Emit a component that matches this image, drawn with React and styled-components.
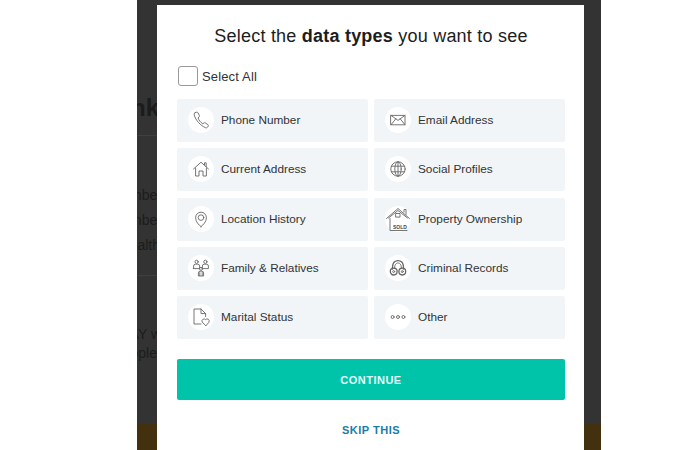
import React from "react";
import styled, { createGlobalStyle } from "styled-components";

const Global = createGlobalStyle`
  html, body { margin: 0; padding: 0; background: #fff; }
  body { font-family: "Liberation Sans", Arial, sans-serif; }
`;

const Stage = styled.div`
  position: relative;
  width: 700px;
  height: 450px;
  overflow: hidden;
  background: #fff;
`;

const Backdrop = styled.div`
  width: 464px;
  height: 450px;
  margin-left: 137px;
  background: #333;
  display: flex;
  flex-direction: column;
  box-sizing: border-box;
`;

const Gutter = styled.div`
  width: 20px;
  height: 424px;
  overflow: hidden;
  display: flex;
  flex-direction: column;
  flex: none;
`;

const BackLine = styled.div`
  display: flex;
  justify-content: flex-end;
  white-space: nowrap;
  color: #1c1c1c;
  font-size: ${(p) => p.$size || 14}px;
  font-weight: ${(p) => (p.$bold ? 700 : 400)};
  height: ${(p) => p.$h}px;
  line-height: ${(p) => p.$h}px;
  margin-top: ${(p) => p.$mt || 0}px;
  margin-right: ${(p) => -(p.$over || 0)}px;
`;

const Rule = styled.div`
  height: 1px;
  background: #3f3f3f;
  margin-top: ${(p) => p.$mt}px;
`;

const Footer = styled.div`
  height: 26px;
  background: #42300f;
`;

const Modal = styled.section`
  position: absolute;
  left: 157px;
  top: 5px;
  width: 427px;
  height: 445px;
  background: #fff;
  box-sizing: border-box;
  padding: 20px 19px 0 20px;
  display: flex;
  flex-direction: column;
`;

const Title = styled.h2`
  margin: 0;
  font-size: 18px;
  line-height: 22px;
  font-weight: 400;
  letter-spacing: 0.22px;
  text-align: center;
  color: #1d1d1d;
  white-space: nowrap;
  b { font-weight: 700; }
`;

const SelectAll = styled.label`
  display: flex;
  align-items: center;
  gap: 4px;
  margin: 19px 0 0 1px;
  height: 20px;
  font-size: 13px;
  letter-spacing: 0.15px;
  color: #333;
`;

const Box = styled.span`
  width: 18px;
  height: 18px;
  border: 1px solid #999;
  border-radius: 3px;
  background: #fff;
  flex: none;
`;

const Grid = styled.div`
  display: grid;
  grid-template-columns: 191px 191px;
  column-gap: 6px;
  row-gap: 6.25px;
  grid-auto-rows: 43px;
  margin-top: 13px;
`;

const Item = styled.div`
  display: flex;
  align-items: center;
  gap: 7px;
  padding-left: 11px;
  padding-bottom: 1px;
  box-sizing: border-box;
  background: #f1f5f8;
  border-radius: 2px;
  font-size: 11.8px;
  color: #333;
  white-space: nowrap;
`;

const Circle = styled.span`
  width: 26px;
  height: 26px;
  border-radius: 50%;
  background: #fff;
  flex: none;
  display: flex;
  align-items: center;
  justify-content: center;
`;

const Glyph = styled.svg`
  width: ${(p) => p.$size || 18}px;
  height: ${(p) => p.$size || 18}px;
  fill: none;
  stroke: #666;
  stroke-width: 0.9;
  stroke-linecap: round;
  stroke-linejoin: round;
  flex: none;
`;

const SoldText = styled.text`
  font-family: "Liberation Sans", Arial, sans-serif;
  font-size: 5px;
  font-weight: 700;
  fill: #444;
  stroke: none;
`;

const Continue = styled.button`
  margin-top: 20px;
  height: 41px;
  width: 388px;
  flex: none;
  border: 0;
  border-radius: 2px;
  background: #00c4aa;
  color: #e9fbf8;
  font: 700 11px "Liberation Sans", Arial, sans-serif;
  letter-spacing: 0.5px;
`;

const Skip = styled.a`
  margin-top: 24px;
  text-align: center;
  color: #1a7ba8;
  font-size: 11px;
  font-weight: 700;
  letter-spacing: 0.5px;
`;

const icons = {
  phone: (
    <Glyph viewBox="0 0 18 18">
      <path d="M3 1.8 L4.6 1.2 C5.2 1 5.7 1.2 6 1.8 L7.4 4.6 C7.6 5.1 7.5 5.6 7.1 5.9 L6 6.8 C6.8 9.2 8.6 11.4 10.8 12.8 L12 11.9 C12.4 11.6 12.9 11.6 13.3 11.9 L15.9 13.7 C16.4 14.1 16.5 14.6 16.2 15.1 L15.4 16.3 C15 16.9 14.3 17 13.6 16.7 C8.4 14.6 3.8 9.4 2.2 4 C2 3 2.4 2.2 3 1.8 Z" />
    </Glyph>
  ),
  house: (
    <Glyph viewBox="0 0 18 18">
      <path d="M1.5 9 L9 2.2 L16.5 9" />
      <path d="M12.5 4.8 V2.8 H14.2 V6.4" />
      <path d="M3.6 8 V16 H7 V11 H11 V16 H14.4 V8" />
    </Glyph>
  ),
  pin: (
    <Glyph viewBox="0 0 18 18">
      <path d="M9 16.6 C6.6 14.8 3.6 11.8 3.6 7.6 A5.4 5.4 0 0 1 14.4 7.6 C14.4 11.8 11.4 14.8 9 16.6 Z" />
      <circle cx="9" cy="7.6" r="2.8" />
    </Glyph>
  ),
  family: (
    <Glyph viewBox="0 0 18 18">
      <circle cx="4.6" cy="2.8" r="1.6" />
      <circle cx="13.4" cy="2.8" r="1.6" />
      <path d="M1.6 9.6 V7 Q1.6 5.2 3.4 5.2 H5.8 Q7.6 5.2 7.6 7 V9.6 H1.6 Z" />
      <path d="M10.4 9.6 V7 Q10.4 5.2 12.2 5.2 H14.6 Q16.4 5.2 16.4 7 V9.6 H10.4 Z" />
      <circle cx="9" cy="9.8" r="1.5" />
      <path d="M6.4 16.6 V14 Q6.4 12.2 8 12.2 H10 Q11.6 12.2 11.6 14 V16.6 Z" />
      <path d="M7.8 13.6 V16.6 M10.2 13.6 V16.6" />
    </Glyph>
  ),
  doc: (
    <Glyph viewBox="0 0 20 20" $size={20}>
      <path d="M10 17 H3 V2 H10 L14.6 6.6 V9.5" />
      <path d="M10 2 V6.6 H14.6" />
      <path d="M14.6 18.6 L11.2 15 A2.1 2.1 0 0 1 14.6 12.6 A2.1 2.1 0 0 1 18 15 Z" />
    </Glyph>
  ),
  mail: (
    <Glyph viewBox="0 0 18 18">
      <rect x="2" y="4.4" width="14" height="9.4" />
      <path d="M2 4.4 L9 9.4 L16 4.4" />
      <path d="M2 13.8 L6.8 7.8 M16 13.8 L11.2 7.8" />
    </Glyph>
  ),
  globe: (
    <Glyph viewBox="0 0 18 18">
      <circle cx="9" cy="9" r="7.2" />
      <ellipse cx="9" cy="9" rx="3.2" ry="7.2" />
      <path d="M9 1.8 V16.2 M2.4 6.2 H15.6 M2.4 11.8 H15.6" />
    </Glyph>
  ),
  sold: (
    <Glyph viewBox="0 0 26 26" $size={26}>
      <path d="M1.5 12.5 L13 2.5 L24.5 12.5" />
      <path d="M3.5 12 L13 4.5 L22.5 12" />
      <path d="M19 6 V3.5 H21 V8.5" />
      <rect x="11" y="7.5" width="4" height="3.6" />
      <path d="M5 12.5 V24.5 H22" />
      <SoldText x="8" y="22.5">SOLD</SoldText>
    </Glyph>
  ),
  cuffs: (
    <Glyph viewBox="0 0 18 18">
      <path d="M3.6 10 C3 2.5 7 1.6 9 1.6 C11 1.6 15 2.5 14.4 10" strokeWidth="1.3" />
      <path d="M5.6 9 C5.6 5 7.6 4 9 4 C10.4 4 12.4 5 12.4 9" />
      <circle cx="4.7" cy="12.6" r="3.4" strokeWidth="1.3" />
      <circle cx="13.3" cy="12.6" r="3.4" strokeWidth="1.3" />
      <circle cx="4.7" cy="12.6" r="1" />
      <circle cx="13.3" cy="12.6" r="1" />
    </Glyph>
  ),
  dots: (
    <Glyph viewBox="0 0 18 18">
      <circle cx="3.6" cy="9" r="1.5" />
      <circle cx="9" cy="9" r="1.5" />
      <circle cx="14.4" cy="9" r="1.5" />
    </Glyph>
  ),
};

const items = [
  ["Phone Number", "phone"],
  ["Email Address", "mail"],
  ["Current Address", "house"],
  ["Social Profiles", "globe"],
  ["Location History", "pin"],
  ["Property Ownership", "sold"],
  ["Family & Relatives", "family"],
  ["Criminal Records", "cuffs"],
  ["Marital Status", "doc"],
  ["Other", "dots"],
];

export default function App() {
  return (
    <Stage>
      <Global />
      <Backdrop>
        <Gutter>
          <BackLine $size={24} $bold $h={28} $mt={94} $over={2}>Think</BackLine>
          <Rule $mt={13} />
          <BackLine $h={18} $mt={50} $over={5}>Phone number</BackLine>
          <BackLine $h={18} $mt={7} $over={5}>Phone number</BackLine>
          <BackLine $h={18} $mt={7} $over={3}>Mental health</BackLine>
          <Rule $mt={21} />
          <BackLine $h={18} $mt={49} $over={4}>EVERYDAY w</BackLine>
          <BackLine $h={18} $mt={1}>people</BackLine>
        </Gutter>
        <Footer />
      </Backdrop>
      <Modal>
        <Title>Select the <b>data types</b> you want to see</Title>
        <SelectAll><Box />Select All</SelectAll>
        <Grid>
          {items.map(([label, icon]) => (
            <Item key={label}>
              <Circle>{icons[icon]}</Circle>
              {label}
            </Item>
          ))}
        </Grid>
        <Continue>CONTINUE</Continue>
        <Skip>SKIP THIS</Skip>
      </Modal>
    </Stage>
  );
}
